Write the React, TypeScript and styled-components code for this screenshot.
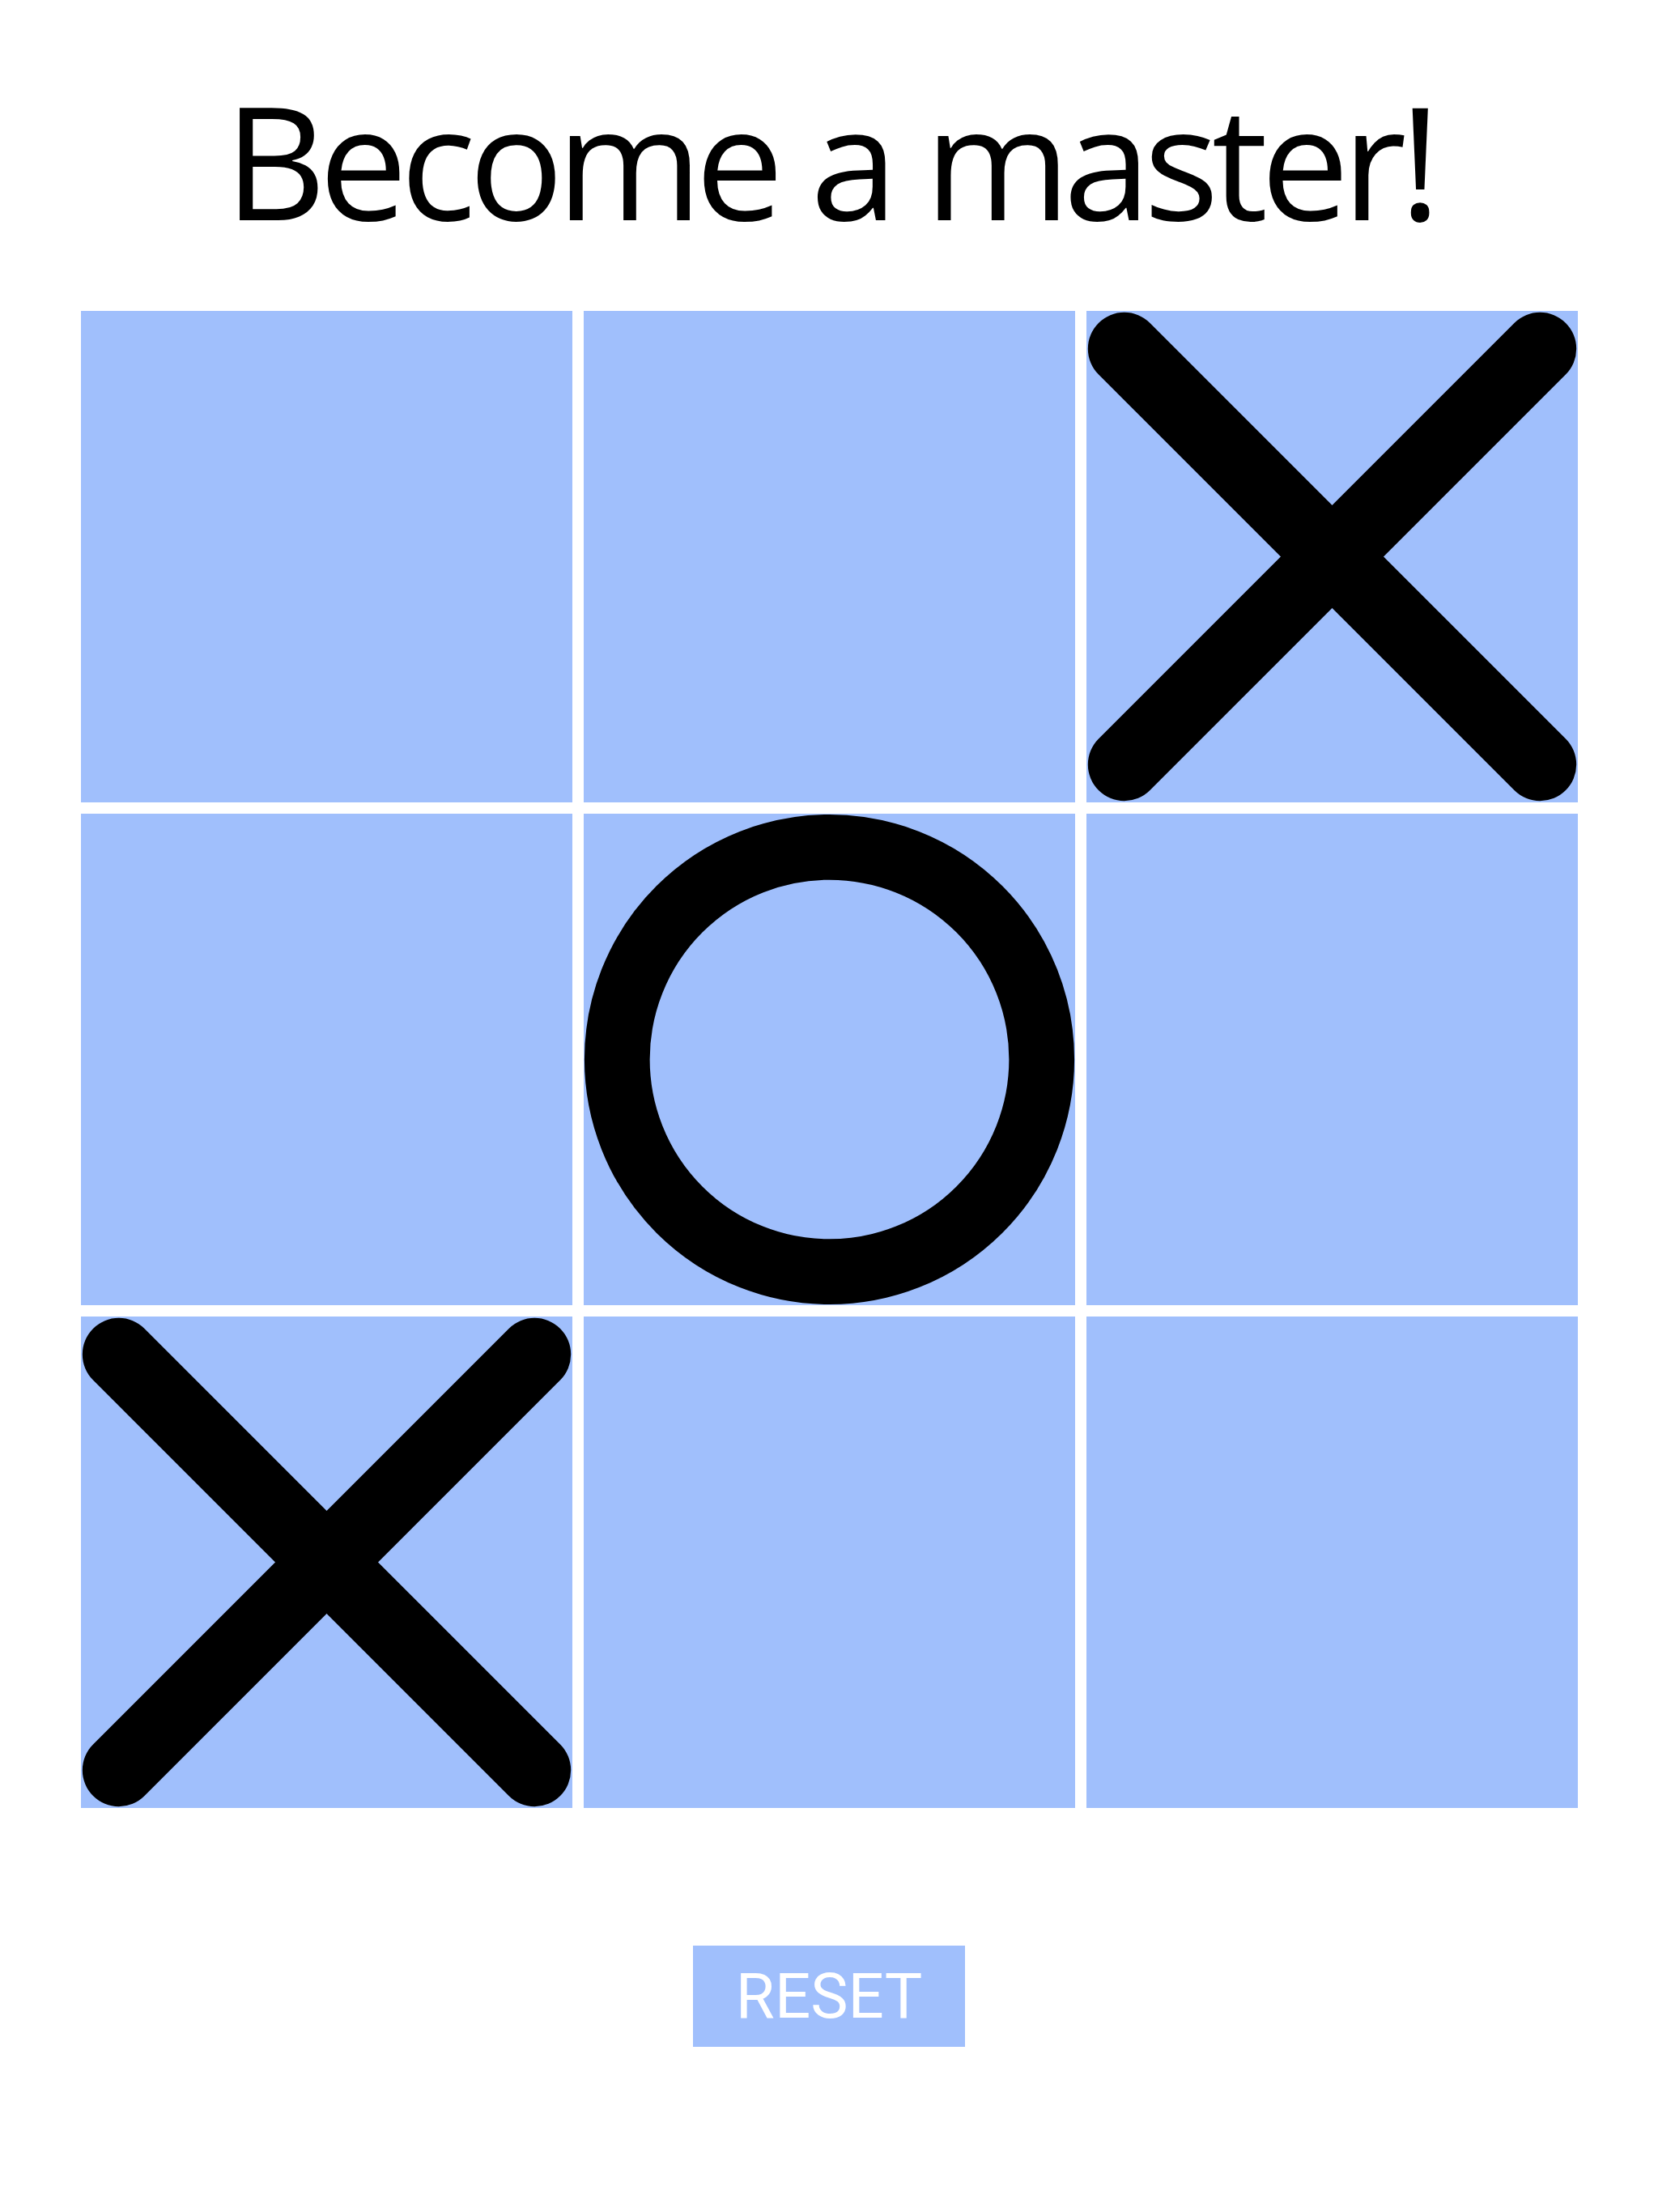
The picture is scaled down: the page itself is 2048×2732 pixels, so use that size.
import styled, { createGlobalStyle } from 'styled-components'

const GlobalStyle = createGlobalStyle`
    html, body {
        margin: 0;
        padding: 0;
        background-color: #FFFFFF;
    }
`

const Page = styled.div`
    width: 2048px;
    min-height: 2732px;
    display: flex;
    flex-direction: column;
    align-items: center;
`

const Title = styled.h1`
    font-family: "Open Sans", "DejaVu Sans", sans-serif;
    font-size: 195px;
    font-weight: 400;
    letter-spacing: -9px;
    line-height: 1;
    color: #000000;
    margin: 99px 0 90px 0;
`

const Board = styled.div`
    display: grid;
    grid-template-columns: repeat(3, 607px);
    grid-template-rows: repeat(3, 607px);
    gap: 14px;
`

const Cell = styled.button`
    background-color: #A0BFFC;
    border: none;
    padding: 0;
    margin: 0;
    cursor: pointer;
    display: flex;
    align-items: center;
    justify-content: center;
`

const ResetButton = styled.button`
    width: 336px;
    height: 125px;
    margin-top: 170px;
    background-color: #A0BFFC;
    border: none;
    color: #FFFFFF;
    font-family: Roboto, "Liberation Sans", sans-serif;
    font-size: 78px;
    font-weight: 400;
    cursor: pointer;
    padding: 0;
`

type Mark = 'X' | 'O' | ''

const board: Mark[] = ['', '', 'X', '', 'O', '', 'X', '', '']

function Cross() {
    return (
        <svg width="100%" height="100%" viewBox="0 0 100 100">
            <g stroke="#000000" strokeWidth="14.8" strokeLinecap="round">
                <line x1="7.7" y1="7.7" x2="92.3" y2="92.3" />
                <line x1="92.3" y1="7.7" x2="7.7" y2="92.3" />
            </g>
        </svg>
    )
}

function Nought() {
    return (
        <svg width="100%" height="100%" viewBox="0 0 100 100">
            <circle cx="50" cy="50" r="43.2" fill="none" stroke="#000000" strokeWidth="13.3" />
        </svg>
    )
}

function App() {
    return (
        <>
            <GlobalStyle />
            <Page>
                <Title>Become a master!</Title>
                <Board>
                    {board.map((mark, i) => (
                        <Cell key={i}>
                            {mark === 'X' && <Cross />}
                            {mark === 'O' && <Nought />}
                        </Cell>
                    ))}
                </Board>
                <ResetButton>RESET</ResetButton>
            </Page>
        </>
    )
}

export default App
